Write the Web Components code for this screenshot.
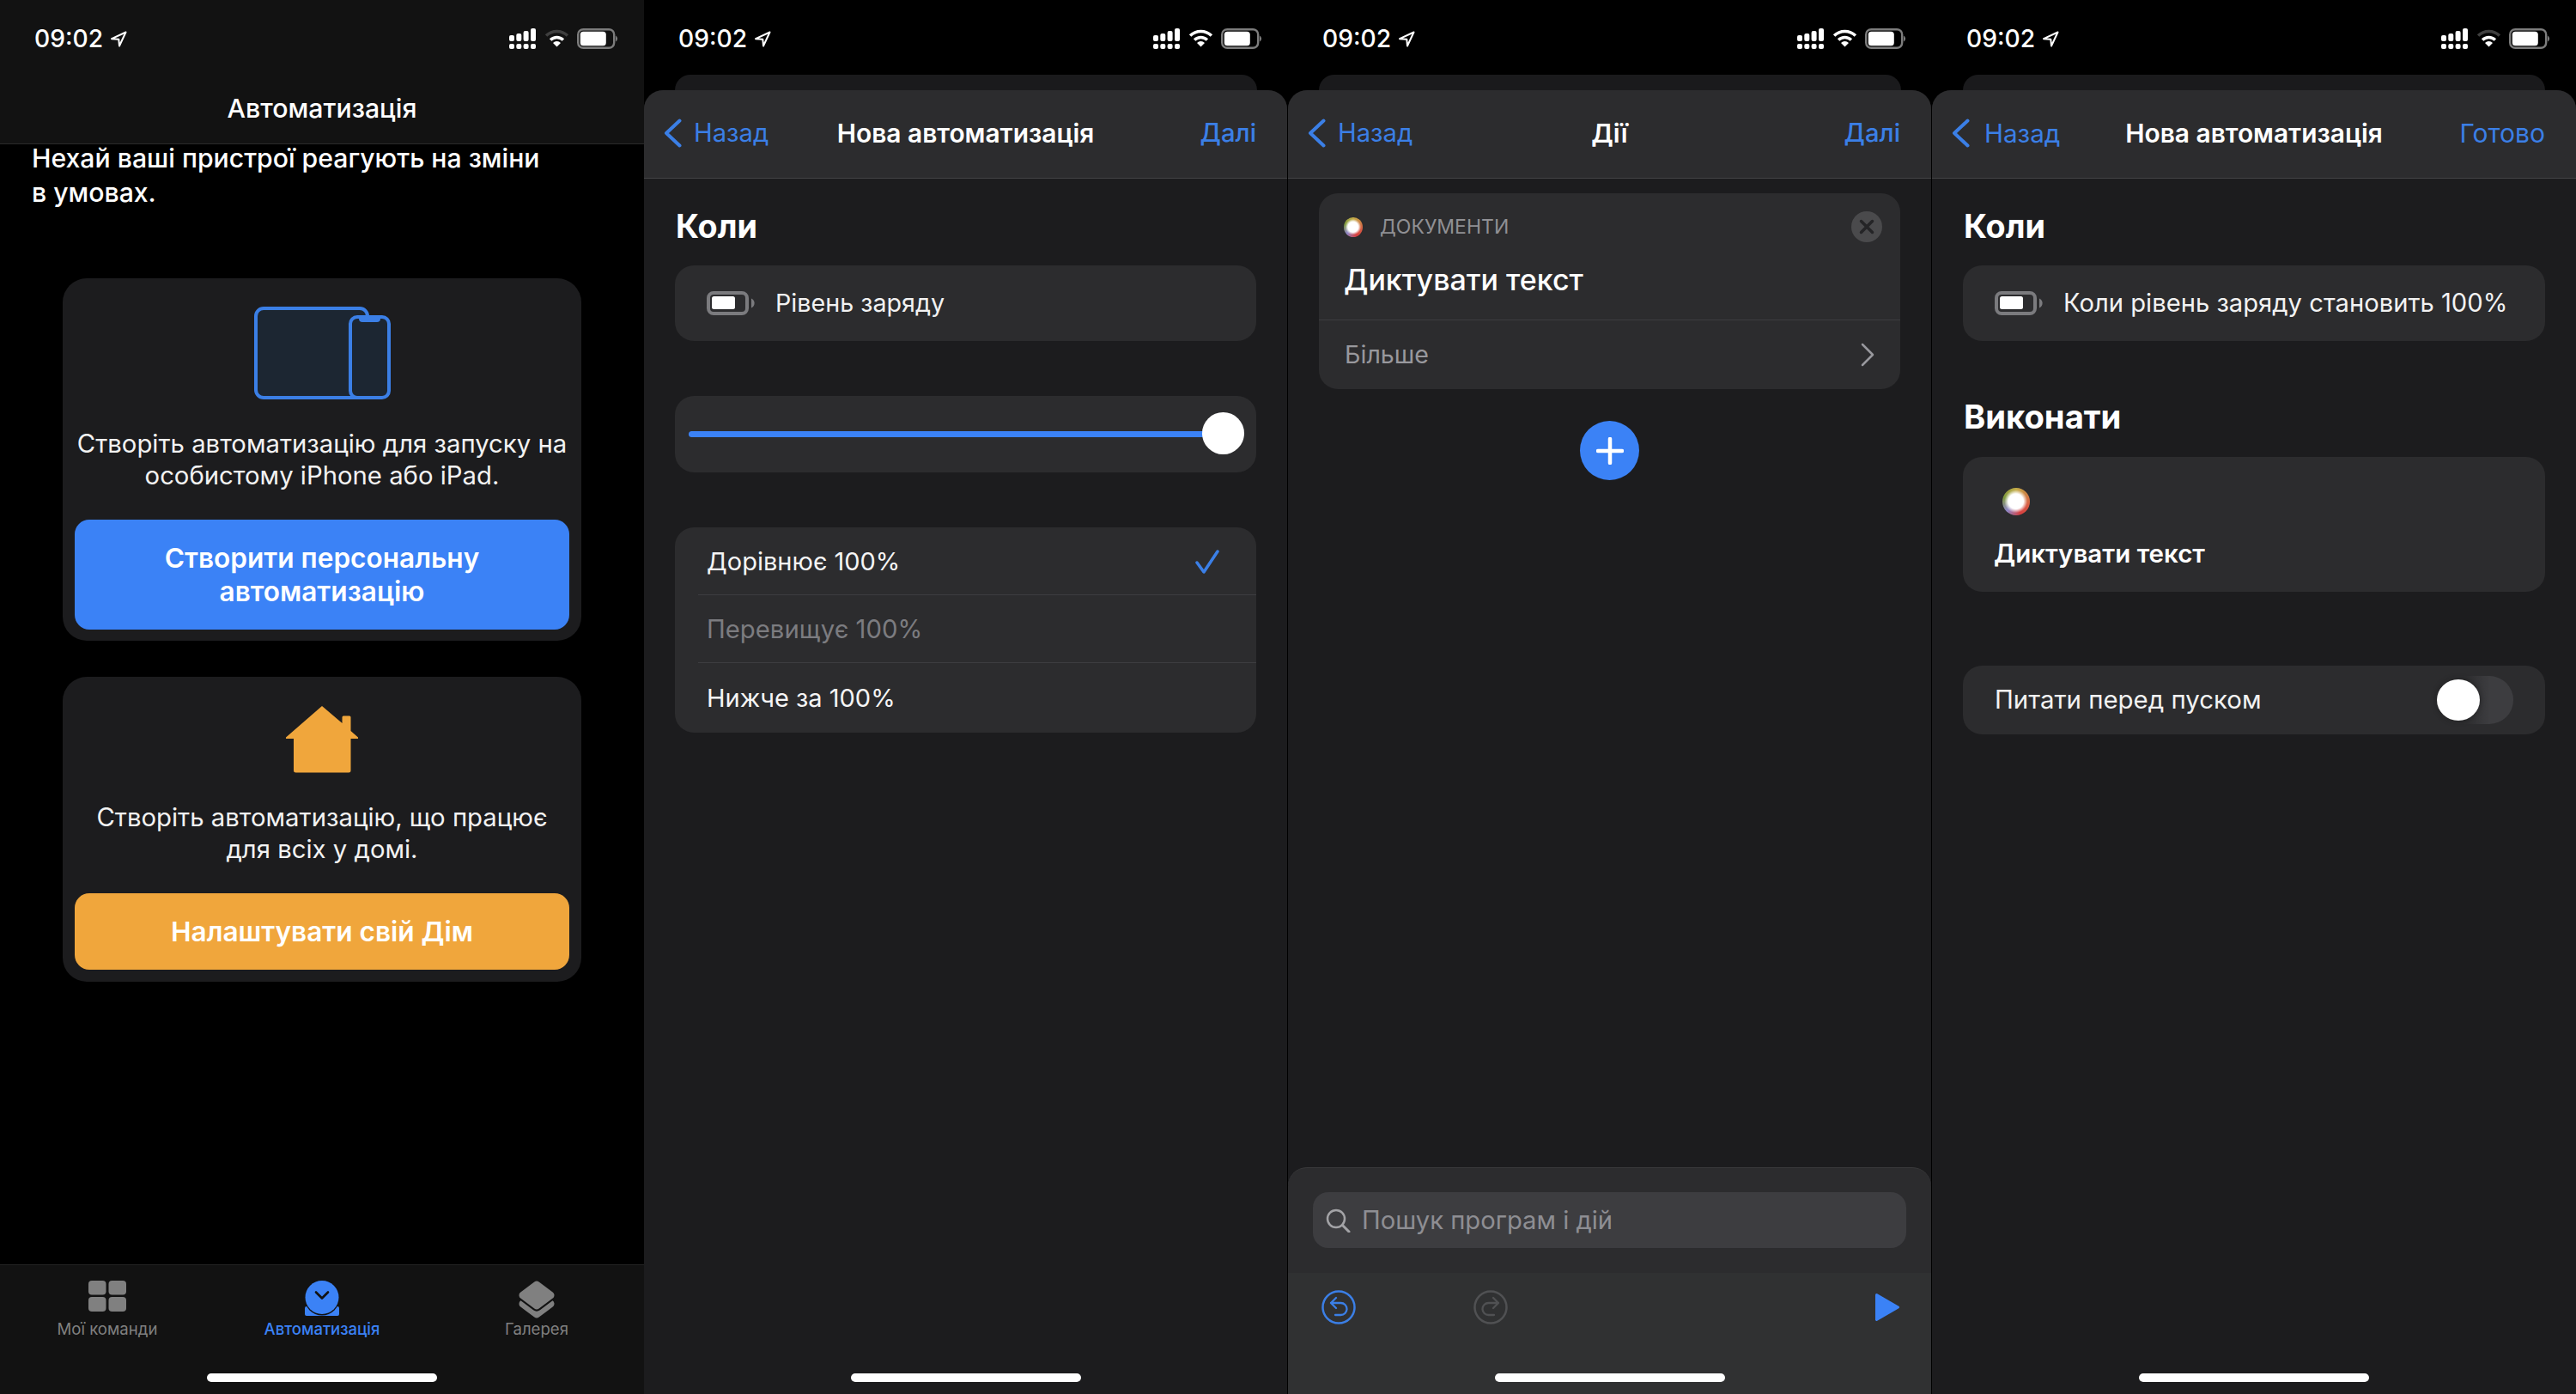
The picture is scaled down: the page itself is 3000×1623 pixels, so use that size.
<!DOCTYPE html>
<html lang="uk"><head><meta charset="utf-8"><title>Автоматизація</title>
<style>html,body{margin:0;padding:0;background:#000}body{font-family:Inter,"Noto Sans",sans-serif;color:#fff}</style></head>
<body>
<app-shell>

  <phone-screen>
    <page-header><status-bar dim></status-bar><span slot="title">Автоматизація</span></page-header>
    <intro-text>Нехай ваші пристрої реагують на зміни<br>в умовах.</intro-text>
    <promo-card>
      <ui-icon slot="icon" name="devices"></ui-icon>
      <span slot="text">Створіть автоматизацію для запуску на<br>особистому iPhone або iPad.</span>
      <span slot="button">Створити персональну<br>автоматизацію</span>
    </promo-card>
    <promo-card tone="home">
      <ui-icon slot="icon" name="house"></ui-icon>
      <span slot="text">Створіть автоматизацію, що працює<br>для всіх у домі.</span>
      <span slot="button">Налаштувати свій Дім</span>
    </promo-card>
    <tab-bar>
      <tab-item icon="grid">Мої команди</tab-item>
      <tab-item icon="auto" active>Автоматизація</tab-item>
      <tab-item icon="layers">Галерея</tab-item>
      <home-indicator></home-indicator>
    </tab-bar>
  </phone-screen>

  <phone-screen>
    <status-bar></status-bar>
    <modal-sheet inset>
      <nav-bar><span slot="title">Нова автоматизація</span><span slot="action">Далі</span></nav-bar>
      <sheet-body>
        <section-title>Коли</section-title>
        <group-card>
          <info-row><ui-icon slot="icon" name="battery"></ui-icon>Рівень заряду</info-row>
        </group-card>
        <level-slider></level-slider>
        <group-card>
          <option-row checked>Дорівнює 100%</option-row>
          <option-row muted>Перевищує 100%</option-row>
          <option-row last>Нижче за 100%</option-row>
        </group-card>
      </sheet-body>
      <home-indicator slot="foot"></home-indicator>
    </modal-sheet>
  </phone-screen>

  <phone-screen>
    <status-bar></status-bar>
    <modal-sheet inset>
      <nav-bar><span slot="title">Дії</span><span slot="action">Далі</span></nav-bar>
      <sheet-body tight>
        <action-card>
          <span slot="category">ДОКУМЕНТИ</span>
          <span slot="title">Диктувати текст</span>
          <span slot="more">Більше</span>
        </action-card>
        <add-button></add-button>
      </sheet-body>
      <search-panel slot="foot"><span slot="placeholder">Пошук програм і дій</span></search-panel>
    </modal-sheet>
  </phone-screen>

  <phone-screen>
    <status-bar dim></status-bar>
    <modal-sheet>
      <nav-bar wide><span slot="title">Нова автоматизація</span><span slot="action">Готово</span></nav-bar>
      <sheet-body>
        <section-title>Коли</section-title>
        <group-card>
          <info-row wide><ui-icon slot="icon" name="battery"></ui-icon>Коли рівень заряду становить 100%</info-row>
        </group-card>
        <section-title second>Виконати</section-title>
        <group-card>
          <run-action>Диктувати текст</run-action>
        </group-card>
        <toggle-row>Питати перед пуском</toggle-row>
      </sheet-body>
      <home-indicator slot="foot"></home-indicator>
    </modal-sheet>
  </phone-screen>

</app-shell>
<script>
const BLUE='#3b7fe6', FILL='#3b82f6';
const ICONS={
  devices:`<svg width="159" height="108" viewBox="0 0 159 108"><rect x="2" y="2" width="130" height="104" rx="9" fill="#1c2632" stroke="${BLUE}" stroke-width="4"/><rect x="112" y="12" width="45" height="94" rx="8" fill="#1c2632" stroke="${BLUE}" stroke-width="4"/><path d="M122 12h25v2a4 4 0 0 1-4 4h-17a4 4 0 0 1-4-4z" fill="${BLUE}"/></svg>`,
  house:`<svg width="84" height="78" viewBox="0 0 84 78"><path d="M42 0L65.500 20V13a1.500 1.500 0 0 1 1.500-1.500h7a1.500 1.500 0 0 1 1.500 1.500V29L84 36.500V38H75.500V75a2.500 2.500 0 0 1-2.500 2.500H11.500A2.500 2.500 0 0 1 9 75V38H0V36.500Z" fill="#f0a63c"/></svg>`,
  battery:`<svg width="57" height="28" viewBox="0 0 57 28"><rect x="2" y="2" width="45" height="24" rx="6" fill="none" stroke="#7b7b7e" stroke-width="4"/><rect x="6" y="6" width="27" height="15" rx="2.500" fill="#fff"/><path d="M52 8.500a6 6 0 0 1 0 11z" fill="#7b7b7e"/></svg>`,
  check:`<svg width="28" height="28" viewBox="0 0 28 28"><path d="M2 15L10 26L26 2" fill="none" stroke="${BLUE}" stroke-width="3.500" stroke-linecap="round" stroke-linejoin="round"/></svg>`,
  chevron:`<svg width="16" height="28" viewBox="0 0 16 28"><path d="M2 2L14 14L2 26" fill="none" stroke="#98989d" stroke-width="2.500" stroke-linecap="round" stroke-linejoin="round"/></svg>`,
  close:`<svg width="36" height="36" viewBox="0 0 36 36"><circle cx="18" cy="18" r="18" fill="#4a4a4c"/><path d="M11.500 11.500L24.500 24.500M24.500 11.500L11.500 24.500" stroke="#242426" stroke-width="3.500" stroke-linecap="round"/></svg>`,
  search:`<svg width="29" height="28" viewBox="0 0 29 28"><circle cx="12" cy="12" r="10" fill="none" stroke="#a3a3a6" stroke-width="2.500"/><path d="M19.500 19.500L27 27" stroke="#a3a3a6" stroke-width="3" stroke-linecap="round"/></svg>`,
  undo:`<svg width="40" height="40" viewBox="0 0 40 40"><circle cx="20" cy="20" r="18.500" fill="none" stroke="${BLUE}" stroke-width="2.500"/><path d="M17 9L11 15L17 21M11 15H22.500a7 7 0 0 1 0 14H16" fill="none" stroke="${BLUE}" stroke-width="2.300" stroke-linecap="round" stroke-linejoin="round"/></svg>`,
  redo:`<svg width="40" height="40" viewBox="0 0 40 40"><circle cx="20" cy="20" r="18.500" fill="none" stroke="#505153" stroke-width="2.500"/><path d="M23 9L29 15L23 21M29 15H17.500a7 7 0 0 0 0 14H24" fill="none" stroke="#505153" stroke-width="2.300" stroke-linecap="round" stroke-linejoin="round"/></svg>`,
  play:`<svg width="30" height="34" viewBox="0 0 30 34"><path d="M2.500 2.500L27.500 17L2.500 31.500Z" fill="${FILL}" stroke="${FILL}" stroke-width="3" stroke-linejoin="round"/></svg>`,
  back:`<svg width="21" height="34" viewBox="0 0 21 34"><path d="M18.500 2.500L3 17L18.500 31.500" fill="none" stroke="${BLUE}" stroke-width="4" stroke-linecap="round" stroke-linejoin="round"/></svg>`,
  plus:`<svg width="32" height="32" viewBox="0 0 32 32"><path d="M16 2V30M2 16H30" stroke="#fff" stroke-width="4.500" stroke-linecap="round"/></svg>`,
  grid:`<svg width="44" height="36" viewBox="0 0 44 36" fill="C"><rect x="0" y="0" width="20.500" height="16.500" rx="4"/><rect x="23.500" y="0" width="20.500" height="16.500" rx="4"/><rect x="0" y="19" width="20.500" height="17" rx="4"/><rect x="23.500" y="19" width="20.500" height="17" rx="4"/></svg>`,
  auto:`<svg width="40" height="41" viewBox="0 0 40 41"><rect x="0" y="30" width="40" height="11" rx="2" fill="C"/><circle cx="20" cy="20" r="20.500" fill="#121212"/><circle cx="20" cy="19.500" r="19.500" fill="C"/><path d="M13 13.500L20 20.500L27 13.500" fill="none" stroke="#121212" stroke-width="2.600" stroke-linecap="round" stroke-linejoin="round"/></svg>`,
  layers:`<svg width="42" height="44" viewBox="0 0 42 44"><path d="M21 16L37 27L21 39L5 27Z" fill="C" stroke="C" stroke-width="9" stroke-linejoin="round"/><path d="M21 5L37 17L21 29L5 17Z" fill="#121212" stroke="#121212" stroke-width="13" stroke-linejoin="round"/><path d="M21 5L37 17L21 29L5 17Z" fill="C" stroke="C" stroke-width="9" stroke-linejoin="round"/></svg>`
};
const icon=(n,c)=>ICONS[n].replace(/"C"/g,`"${c||'#808080'}"`);

function define(tag,css,html){
  customElements.define(tag,class extends HTMLElement{
    connectedCallback(){
      if(this.shadowRoot)return;
      this.attachShadow({mode:'open'}).innerHTML=`<style>${css}</style>${typeof html==='function'?html(this):html}`;
    }
  });
}
define('ui-icon',':host{display:block;line-height:0}',h=>icon(h.getAttribute('name')));
define('app-shell',':host{display:grid;grid-template-columns:repeat(4,750px);width:3000px;height:1623px;overflow:hidden;background:#000}','<slot></slot>');
define('phone-screen',':host{display:flex;flex-direction:column;height:1623px;min-width:0;background:#000;color:#fff}','<slot></slot>');

define('status-bar',`:host{display:flex;height:87px;box-sizing:border-box;padding:28px 31px 0 40px;flex:none}
  .t{font-size:28.2px;line-height:34px;font-weight:500;letter-spacing:0}
  .loc{margin:8px 0 0 8px}.r{margin-left:auto;display:flex;padding-top:5px;align-items:flex-start}
  svg{display:block}`,
  h=>`<span class="t">09:02</span>
  <svg class="loc" width="20" height="19" viewBox="0 0 20 19"><path d="M18.500 1.500L2 9.200L10.300 9.700L11 17.500Z" fill="none" stroke="#fff" stroke-width="2" stroke-linejoin="round"/></svg>
  <span class="r">
   <svg width="31" height="24" viewBox="0 0 31 24" fill="#fff"><rect x="0" y="8" width="6" height="7" rx="2"/><rect x="8.300" y="6" width="6" height="9" rx="2"/><rect x="16.600" y="3" width="6" height="12" rx="2"/><rect x="25" y="0" width="6" height="15" rx="2"/><rect x="0" y="18" width="6" height="6" rx="2"/><rect x="8.300" y="18" width="6" height="6" rx="2"/><rect x="16.600" y="18" width="6" height="6" rx="2"/><rect x="25" y="18" width="6" height="6" rx="2"/></svg>
   <svg style="margin:1px 0 0 10px" width="29" height="21" viewBox="0 0 29 21"><g fill="none" stroke-width="3.500"><path d="M2.100 7.600A17.500 17.500 0 0 1 26.900 7.600" stroke="${h.hasAttribute('dim')?'#3f3f3f':'#fff'}"/><path d="M7.100 12.600A10.500 10.500 0 0 1 21.900 12.600" stroke="#fff"/></g><path d="M14.500 20.500L10 15.900A6.300 6.300 0 0 1 19 15.900Z" fill="#fff"/></svg>
   <svg style="margin-left:9px" width="47" height="24" viewBox="0 0 47 24"><rect x="1.200" y="1.200" width="42" height="21.600" rx="6" fill="none" stroke="#7c7c7c" stroke-width="2.400"/><rect x="3.800" y="3.800" width="30" height="16.400" rx="3.500" fill="#fff"/><path d="M45 8.500a4 4 0 0 1 0 7z" fill="#7c7c7c"/></svg>
  </span>`);

define('page-header',`:host{display:block;height:167px;background:#121212;border-bottom:1px solid #2a2a2a;flex:none}
  .title{text-align:center;font-size:30.3px;line-height:36px;font-weight:500;margin-top:21px}`,
  '<slot></slot><div class="title"><slot name="title"></slot></div>');
define('intro-text',':host{display:block;margin:-4px 0 80px 37px;font-size:30.2px;line-height:40px;font-weight:500;flex:none}','<slot></slot>');
define('promo-card',`:host{display:block;margin:0 73px 42px 73px;padding:33px 14px 13px;background:#1c1c1e;border-radius:28px;flex:none;--tone:#3b82f6}
  :host([tone=home]){--tone:#f0a63c;padding-bottom:14px}
  :host([tone=home]) .i{padding-top:1px}
  .i{display:flex;justify-content:center}
  .x{margin:33px 0 33px;text-align:center;font-size:29.3px;line-height:37px;color:#f2f2f2;white-space:nowrap}
  .b{background:var(--tone);border-radius:17px;padding:25px 0;text-align:center;font-size:31.6px;line-height:39px;font-weight:600;color:#fff}`,
  '<div class="i"><slot name="icon"></slot></div><div class="x"><slot name="text"></slot></div><div class="b"><slot name="button"></slot></div>');
define('tab-bar',`:host{display:grid;grid-template-columns:repeat(3,250px);row-gap:41px;margin-top:auto;height:151px;box-sizing:border-box;background:#121212;border-top:1px solid #242424;padding-top:18px;flex:none}
  ::slotted(home-indicator){grid-column:1 / -1}`,'<slot></slot>');
define('tab-item',`:host{display:flex;flex-direction:column;align-items:center;color:#808080;font-size:18.6px;line-height:22px}
  :host([active]){color:#3b82f6;font-weight:500;font-size:18.5px}
  .i{height:45px;display:flex;align-items:flex-start;justify-content:center}`,
  h=>`<div class="i">${icon(h.getAttribute('icon'),h.hasAttribute('active')?'#3b82f6':'#808080')}</div><slot></slot>`);
define('home-indicator',`:host{display:block;flex:none;padding:0 0 14px;}
  div{width:268px;height:10px;border-radius:5px;background:#fff;margin:0 auto}`,'<div></div>');

define('modal-sheet',`:host{display:flex;flex-direction:column;flex:1;min-height:0}
  .peek{height:18px;margin:0 36px;background:#1a1a1c;border-radius:18px 18px 0 0;flex:none}
  :host([inset]) .sheet{margin-right:1px}
  .sheet{flex:1;display:flex;flex-direction:column;background:#1c1c1e;border-radius:22px 22px 0 0;overflow:hidden;min-height:0}
  .foot{margin-top:auto}`,
  '<div class="peek"></div><div class="sheet"><slot></slot><div class="foot"><slot name="foot"></slot></div></div>');
define('nav-bar',`:host{display:grid;grid-template-columns:1fr auto 1fr;align-items:center;height:103px;box-sizing:border-box;padding:0 36px 2px 36px;background:#2c2c2e;border-bottom:1px solid #434345;flex:none;font-size:29.2px;line-height:36px}
  .l{display:flex;align-items:center;gap:14px;color:${BLUE};margin-left:-13px}
  :host([wide]) .l{gap:17px;font-size:29.6px}
  .t{font-weight:600;font-size:29.9px;white-space:nowrap}
  .a{justify-self:end;color:${BLUE};font-weight:500}
  :host([wide]) .a{font-size:30px;font-weight:400}
  svg{display:block}`,
  `<div class="l">${ICONS.back}<span>Назад</span></div><div class="t"><slot name="title"></slot></div><div class="a"><slot name="action"></slot></div>`);
define('sheet-body',`:host{display:block;padding:33px 36px 0}:host([tight]){padding-top:17px}`,'<slot></slot>');
define('section-title',`:host{display:block;font-size:37.7px;line-height:44px;font-weight:700;margin:0 0 24px 1px}
  :host([second]){margin-top:66px;margin-bottom:25px;font-size:38.2px}`,'<slot></slot>');
define('group-card',`:host{display:block;background:#2c2c2e;border-radius:22px;overflow:hidden}`,'<slot></slot>');
define('info-row',`:host{display:flex;align-items:center;height:88px;padding-left:37px;gap:23px;font-size:28.7px;line-height:36px;color:#f2f2f2;white-space:nowrap}
  :host([wide]){font-size:29.2px}`,'<slot name="icon"></slot><span><slot></slot></span>');
define('level-slider',`:host{display:flex;align-items:center;height:89px;margin:64px 0;padding:0 14px 0 16px;background:#2c2c2e;border-radius:22px}
  .tr{flex:1;height:7px;margin:0 -10px 0 0;background:#3b82f6;border-radius:4px}
  .k{width:49px;height:49px;border-radius:50%;background:#fff;position:relative;margin-top:-2px}`,'<div class="tr"></div><div class="k"></div>');
define('option-row',`:host{display:flex;align-items:center;height:79px;padding:0 43px 0 37px;font-size:29px;line-height:36px;position:relative;color:#f5f5f5}
  :host([muted]){color:#7c7c80;font-size:29.3px}
  :host([last]){height:81px}
  :host(:not([last]))::after{content:"";position:absolute;left:27px;right:0;bottom:0;height:1.500px;background:#3d3d40}
  .c{margin-left:auto;line-height:0}`,
  h=>`<span><slot></slot></span>${h.hasAttribute('checked')?`<span class="c">${ICONS.check}</span>`:''}`);
define('action-card',`:host{display:block;background:#2c2c2e;border-radius:22px;overflow:hidden}
  .top{height:148px;box-sizing:border-box;padding:21px 21px 0 29px;border-bottom:1px solid #3d3d40}
  .h{display:flex;align-items:center;height:36px;gap:20px;color:#909094;font-size:23px;line-height:30px}
  .h svg{margin-left:auto;display:block}
  .d{width:22px;height:23px}
  .n{font-size:34px;line-height:40px;font-weight:500;margin-top:24px;white-space:nowrap}
  .m{display:flex;align-items:center;justify-content:space-between;height:80px;padding:0 30px 0 30px;color:#98989d;font-size:28.6px;line-height:36px}
  .m svg{display:block}`,
  `<div class="top"><div class="h"><app-dot class="d"></app-dot><slot name="category"></slot>${ICONS.close}</div><div class="n"><slot name="title"></slot></div></div><div class="m"><slot name="more"></slot>${ICONS.chevron}</div>`);
define('app-dot',`:host{display:block;border-radius:50%;background:radial-gradient(circle closest-side at 49% 49%,#fff 0 56%,rgba(255,255,255,0) 86%),conic-gradient(from 0deg,#c4ac48,#d85a44 110deg,#d63f3f 160deg,#8f87c8 225deg,#7f9a3e 290deg,#c4ac48)}`,'');
define('add-button',`:host{display:flex;align-items:center;justify-content:center;width:69px;height:69px;border-radius:50%;background:${FILL};margin:37px auto 0}svg{display:block}`,ICONS.plus);
define('search-panel',`:host{display:block;background:#2c2c2e;border-radius:22px 22px 0 0;border-top:1px solid #3a3a3c;overflow:hidden}
  .f{display:flex;align-items:center;gap:13px;height:65px;margin:28px 29px 29px 29px;padding-left:15px;background:#3d3d40;border-radius:18px;color:#8e8e93;font-size:29.2px;line-height:36px}
  .tb{background:#303132;height:141px;box-sizing:border-box;padding:20px 36px 0 39px}
  .ic{display:flex;gap:137px;height:97px}
  .ic .p{margin:3px 0 0 auto}
  .tb home-indicator{margin:0 -36px 0 -39px}
  svg{display:block}`,
  `<div class="f">${ICONS.search}<slot name="placeholder"></slot></div><div class="tb"><div class="ic">${ICONS.undo}${ICONS.redo}<span class="p">${ICONS.play}</span></div><home-indicator></home-indicator></div>`);
define('run-action',`:host{display:block;height:157px;box-sizing:border-box;padding:36px 0 0 36px}
  .d{width:32px;height:32px;margin:0 0 26px 10px}
  .t{font-size:29.5px;line-height:36px;font-weight:600}`,'<app-dot class="d"></app-dot><div class="t"><slot></slot></div>');
define('toggle-row',`:host{display:flex;align-items:center;height:80px;margin-top:86px;padding:0 37px 0 37px;background:#2c2c2e;border-radius:22px;font-size:29.4px;line-height:36px;color:#f2f2f2}
  .s{margin-left:auto;width:91px;height:56px;box-sizing:border-box;padding:4px 2px;border-radius:28px;background:linear-gradient(90deg,#2e2e30 40%,#3d3d40 70%);display:flex}
  .k{width:50px;height:48px;border-radius:50%;background:#fff;box-shadow:0 0 6px 1px rgba(0,0,0,.3)}`,
  '<span><slot></slot></span><div class="s"><div class="k"></div></div>');
</script>
</body></html>
